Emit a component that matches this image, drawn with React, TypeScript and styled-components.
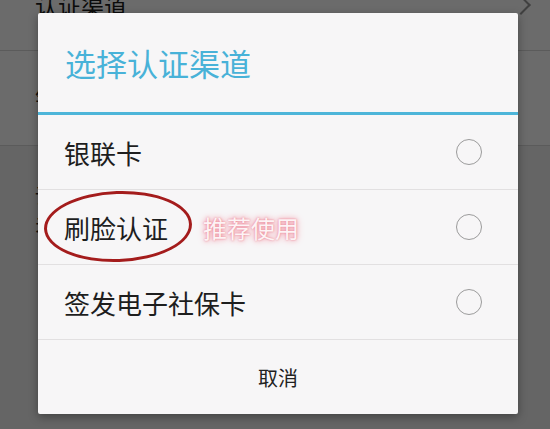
import React from 'react';
import styled, { createGlobalStyle } from 'styled-components';

const GlobalStyle = createGlobalStyle`
  html, body {
    margin: 0;
    padding: 0;
    overflow: hidden;
  }
  body {
    width: 550px;
    height: 429px;
    background: #f0f0f0;
    font-family: "Noto Sans CJK SC", "Noto Sans", sans-serif;
  }
`;

const Page = styled.div`
  width: 550px;
  height: 429px;
  overflow: hidden;
  position: relative;
  background: #f0f0f0;
`;

const ListRow = styled.div<{ $height: number; $shift?: number }>`
  display: flex;
  align-items: center;
  justify-content: space-between;
  height: ${p => p.$height}px;
  margin-top: ${p => p.$shift || 0}px;
  padding: 0 22px 0 35px;
  background: #ffffff;
  border-bottom: 1px solid #d8d8d8;
  font-size: 23px;
  color: #1c1c1c;
`;

const Chevron = styled.span`
  width: 12px;
  height: 12px;
  border-top: 2px solid #9a9a9a;
  border-right: 2px solid #9a9a9a;
  transform: rotate(45deg);
`;

const Paragraph = styled.p`
  margin: 0;
  padding: 36px 22px 0 35px;
  font-size: 20px;
  line-height: 27px;
  color: #1c1c1c;
`;

const Overlay = styled.div`
  position: absolute;
  inset: 0;
  background: rgba(0, 0, 0, 0.58);
  display: flex;
  align-items: flex-start;
  padding: 13px 0 0 38px;
`;

const Dialog = styled.div`
  width: 480px;
  background: #f7f6f7;
  border-radius: 2px;
  box-shadow: 0 3px 10px rgba(0, 0, 0, 0.35);
  overflow: hidden;
`;

const Header = styled.div`
  height: 99px;
  display: flex;
  align-items: center;
  padding-left: 27px;
  border-bottom: 3px solid #4db5d9;
  font-size: 31px;
  color: #48b2d8;
`;

const OptionRow = styled.div`
  position: relative;
  height: 74px;
  display: flex;
  align-items: center;
  padding: 0 36px 0 26px;
  border-bottom: 1px solid #e2e0e1;
  font-size: 26px;
  color: #1e1e1e;
`;

const OptionLabel = styled.span`
  flex: 1;
  display: flex;
  align-items: center;
`;

const Recommend = styled.span`
  margin-left: 35px;
  font-size: 24px;
  color: #fdf3f5;
  text-shadow: 0 0 2px #e97a8c, 0 0 5px #f2a0ae, 0 0 8px #f6b7c2;
`;

const Radio = styled.span`
  width: 24px;
  height: 24px;
  border-radius: 50%;
  border: 1.5px solid #9b9b9b;
`;

const Circled = styled.span`
  position: absolute;
  left: 6px;
  top: 1px;
  width: 148px;
  height: 71px;
  box-sizing: border-box;
  border: 3px solid #a41c1c;
  border-radius: 50%;
  transform: rotate(-2deg);
  pointer-events: none;
`;

const Footer = styled.div`
  height: 74px;
  display: flex;
  align-items: center;
  justify-content: center;
  font-size: 20px;
  color: #222222;
`;

const options = [
  { label: '银联卡' },
  { label: '刷脸认证', tag: '推荐使用', circled: true },
  { label: '签发电子社保卡' },
];

const App: React.FC = () => {
  return (
    <>
      <GlobalStyle />
      <Page>
        <ListRow $height={90} $shift={-40}>
          <span>认证渠道</span>
          <Chevron />
        </ListRow>
        <ListRow $height={94}>
          <span>银联卡</span>
        </ListRow>
        <Paragraph>
          请选择认证渠道进行身份认证，认证成功后方可办理相关业务，认证信息仅用于本人身份核验。
        </Paragraph>

        <Overlay>
          <Dialog>
            <Header>选择认证渠道</Header>
            {options.map(opt => (
              <OptionRow key={opt.label}>
                {opt.circled && <Circled />}
                <OptionLabel>
                  {opt.label}
                  {opt.tag && <Recommend>{opt.tag}</Recommend>}
                </OptionLabel>
                <Radio />
              </OptionRow>
            ))}
            <Footer>取消</Footer>
          </Dialog>
        </Overlay>
      </Page>
    </>
  );
};

export default App;
